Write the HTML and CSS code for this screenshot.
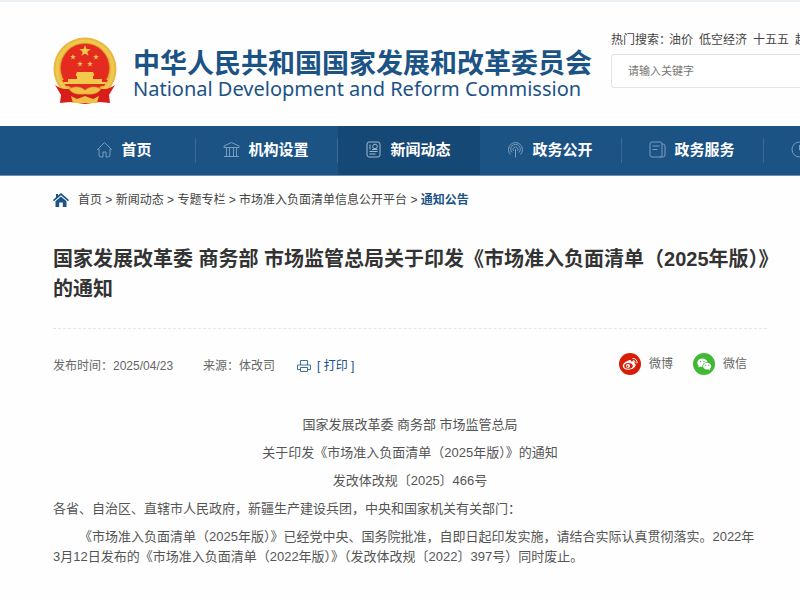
FILE: index.html
```html
<!DOCTYPE html>
<html lang="zh-CN">
<head>
<meta charset="utf-8">
<title>国家发展和改革委员会</title>
<link rel="stylesheet" href="styles.css">
</head>
<body>
<header class="masthead">
  <div class="brand">
    <svg class="emblem" viewBox="0 0 64 68" aria-hidden="true">
      <defs>
        <path id="star" d="M0-5 1.2-1.6 4.8-1.5 1.9.6 2.9 4 0 2-2.9 4-1.9.6-4.8-1.5-1.2-1.6Z"/>
      </defs>
      <circle cx="32" cy="32" r="31.500" fill="#e9b93e"/>
      <circle cx="32" cy="32" r="28" fill="none" stroke="#f0c850" stroke-width="3"/>
      <circle cx="32" cy="31" r="24.500" fill="#e52a20" stroke="#cf8e28" stroke-width=".6"/>
      <path d="M2 48c3 2 7 4 10 4h40c3 0 7-2 10-4l-6 10 1 8-10-1-15 2-15-2-10 1 1-8Z" fill="#d81e1a"/>
      <path d="M9 43h46l-4 6H13Z" fill="#e52a20"/>
      <g fill="#f3c94b">
        <use href="#star" transform="translate(32 14) scale(1.2)"/>
        <use href="#star" transform="translate(20 20) scale(.6)"/>
        <use href="#star" transform="translate(43 20) scale(.6)"/>
        <use href="#star" transform="translate(27 27) scale(.6)"/>
        <use href="#star" transform="translate(37 27) scale(.6)"/>
        <path d="M23 37l1-2h16l1 2v2h-1v3h9v3h4l1 2H10l1-2h4v-3h9v-3h-1Z"/>
      </g>
      <path d="M16 52c6-3 10-3 16 1 6-4 10-4 16-1-3 5-10 6-16 5-6 1-13 0-16-5Z" fill="#efc044" stroke="#ca8424" stroke-width=".6"/>
      <path d="M18 59l6 3 8-3 8 3 6-3-2 7H20Z" fill="#efc044"/>
    </svg>
    <div class="brand-text">
      <div class="brand-cn">中华人民共和国国家发展和改革委员会</div>
      <div class="brand-en" lang="en">National Development and Reform Commission</div>
    </div>
  </div>
  <form class="search">
    <div class="hot"><span>热门搜索：</span><a href="#">油价</a><a href="#">低空经济</a><a href="#">十五五</a><a href="#">超长期国债</a></div>
    <input class="search-box" type="text" aria-label="请输入关键字" placeholder="请输入关键字">
  </form>
</header>

<nav class="nav">
  <a class="nav-item" href="#">
    <svg class="nav-icon" viewBox="0 0 17 17" aria-hidden="true"><path d="M1 9 8.500 1.500 16 9M3 8v6q0 2 2 2h2v-5h3v5h2q2 0 2-2V8"/></svg>首页</a>
  <a class="nav-item" href="#">
    <svg class="nav-icon" viewBox="0 0 17 17" aria-hidden="true"><path d="M1 5 8.500 1.500 16 5v1.500H1ZM3.500 7v8M6.500 7v8M10.500 7v8M13.500 7v8M1 15.500h15"/></svg>机构设置</a>
  <a class="nav-item nav-active" href="#">
    <svg class="nav-icon" viewBox="0 0 17 17" aria-hidden="true"><rect x="2" y="1" width="13" height="15" rx="2"/><path d="M5 3.500v5M4.500 10.500h8M4.500 13h6M7 8.500h5.500"/><circle cx="10" cy="5.500" r="2.300"/></svg>新闻动态</a>
  <a class="nav-item" href="#">
    <svg class="nav-icon" viewBox="0 0 17 17" aria-hidden="true"><path d="M3.500 13.500a7 7 0 1 1 10 0M5 11.500a4.800 4.800 0 1 1 7 0M6.500 10a2.500 2.500 0 1 1 4 0M8.500 8v8.500"/></svg>政务公开</a>
  <a class="nav-item" href="#">
    <svg class="nav-icon" viewBox="0 0 17 17" aria-hidden="true"><rect x="1" y="1" width="12" height="15" rx="2"/><path d="M13 3h1q2 0 2 2v9q0 2-2 2h-3M3.500 5h7M3.500 8.500h5"/></svg>政务服务</a>
  <a class="nav-item" href="#">
    <svg class="nav-icon" viewBox="0 0 17 17" aria-hidden="true"><circle cx="8.500" cy="8.500" r="7.500"/><path d="M8.500 4v5l3 2"/></svg>互动交流</a>
</nav>

<main class="content">
  <div class="crumbs">
    <svg class="crumb-icon" viewBox="0 0 16 14" aria-hidden="true"><path d="M8 0 16 7l-1 1.200L8 2.200 1 8.200 0 7 3 4.300V1h2v1.600ZM8 3.500l5.500 4.800V14H9.800V9.500H6.200V14H2.500V8.300Z"/></svg>
    <p class="crumb-path"><a href="#">首页</a> &gt; <a href="#">新闻动态</a> &gt; <a href="#">专题专栏</a> &gt; <a href="#">市场准入负面清单信息公开平台</a> &gt; <a class="crumb-current" href="#">通知公告</a></p>
  </div>
  <h1 class="title">国家发展改革委 商务部 市场监管总局关于印发《市场准入负面清单（2025年版）》的通知</h1>
  <div class="meta">
    <span class="date">发布时间：2025/04/23</span>
    <span class="source">来源：体改司</span>
    <button class="print" type="button">
      <svg class="print-icon" viewBox="0 0 14 12" aria-hidden="true"><path d="M3.500 5V.5h7V5M3.500 9.500h-3V5h13v4.500h-3M3.500 7.500h7v4h-7Z"/></svg>[ 打印 ]</button>
    <div class="share">
      <a class="share-link" href="#">
        <svg class="share-icon" viewBox="0 0 22 22" aria-hidden="true"><circle cx="11" cy="11" r="11" fill="#d81e06"/><path d="M9.500 7.500c1.500-.8 3-.4 2.600 1.200 2-.8 3.600-.2 3 1.400 1.500.5 2 1.600 1.300 3-1 2.300-3.700 3.600-6.800 3.600-3 0-5.800-1.400-5.800-3.800 0-2 2.800-4.600 5.700-5.400Z" fill="#fff"/><ellipse cx="9.500" cy="12.800" rx="4.300" ry="2.900" fill="#d81e06"/><circle cx="9" cy="13" r="2.100" fill="#fff"/><circle cx="8.600" cy="13.300" r=".9" fill="#d81e06"/><path d="M13.500 5.500a4 4 0 0 1 4.500 4.800M14 7.500a2 2 0 0 1 2 2.300" fill="none" stroke="#fff"/></svg>微博</a>
      <a class="share-link" href="#">
        <svg class="share-icon" viewBox="0 0 22 22" aria-hidden="true"><circle cx="11" cy="11" r="11" fill="#42b935"/><path d="M9.300 5.500c3 0 5 1.800 5.100 3.800-3.300 0-5.400 2-5 4.600-.9.100-1.700 0-2.500-.3L5.200 14.500l.4-1.700C3.300 10.500 4.300 5.500 9.300 5.500Z" fill="#fff"/><path d="M14 9.800c4.300.2 5.500 4.200 2.900 6l.3 1.300-1.400-.7c-3.300.7-5.800-.9-5.800-3.100 0-1.900 1.700-3.500 4-3.500Z" fill="#fff"/><g fill="#42b935"><circle cx="7.500" cy="8.500" r=".7"/><circle cx="11" cy="8.500" r=".7"/><circle cx="12.700" cy="12.200" r=".6"/><circle cx="15.500" cy="12.200" r=".6"/></g></svg>微信</a>
    </div>
  </div>
  <article class="article">
    <p class="centered">国家发展改革委 商务部 市场监管总局</p>
    <p class="centered">关于印发《市场准入负面清单（2025年版）》的通知</p>
    <p class="centered">发改体改规〔2025〕466号</p>
    <p>各省、自治区、直辖市人民政府，新疆生产建设兵团，中央和国家机关有关部门：</p>
    <p class="indented">《市场准入负面清单（2025年版）》已经党中央、国务院批准，自即日起印发实施，请结合实际认真贯彻落实。2022年<span class="date-unit">3月12日</span>发布的《市场准入负面清单（2022年版）》（发改体改规〔2022〕397号）同时废止。</p>
  </article>
</main>
</body>
</html>
```

FILE: styles.css
```css
* { box-sizing: border-box; }

body {
  margin: 0;
  overflow-x: hidden;
  border-top: 2px solid #ebf0f5;
  background: #fefefe;
  color: #444;
  font: 12px/20px "Liberation Sans", "Noto Sans CJK SC", sans-serif;
}

a { color: inherit; text-decoration: none; }
p { margin: 0; }

.masthead {
  display: flex;
  align-items: flex-start;
  height: 124px;
  padding: 28px 0 0 53px;
  overflow: hidden;
}

.brand { display: flex; flex: none; gap: 16px; width: 558px; }
.emblem { flex: none; width: 64px; height: 68px; margin-top: 7px; }
.brand-text { padding-top: 20px; color: #1b5385; white-space: nowrap; }
.brand-cn { font-size: 27px; font-weight: bold; line-height: 28px; }
.brand-en { font: 20px/22px "Noto Sans", sans-serif; }

.search { flex: none; width: 300px; }
.hot { display: flex; gap: 6px; white-space: nowrap; }
.hot span { margin-right: -8px; }
.search-box {
  display: block;
  width: 100%;
  height: 34px;
  margin-top: 4px;
  padding: 0 16px;
  border: 1px solid #e3e3e3;
  border-radius: 3px;
  background: #fff;
  font: inherit;
  font-size: 11px;
}
.search-box::placeholder { color: #757575; }

.nav {
  display: flex;
  height: 50px;
  padding-left: 54px;
  border-bottom: 1px solid #6b92b5;
  overflow: hidden;
  background: #1b5385;
}
.nav-item {
  display: flex;
  flex: none;
  align-items: center;
  justify-content: center;
  gap: 8px;
  width: 142px;
  padding: 0 2px 2px 0;
  background: linear-gradient(#376a97, #376a97) right center / 1px 25px no-repeat;
  color: #fff;
  font-size: 15px;
  font-weight: bold;
}
.nav-active { background: #164876; }
.nav-icon { width: 17px; height: 17px; fill: none; stroke: #7c9dbb; }
.nav-active .nav-icon { stroke: #a3b9cd; }

.content { padding: 14px 33px 0 53px; }

.crumbs { display: flex; align-items: center; gap: 9px; }
.crumb-icon { width: 16px; height: 14px; fill: #1b5385; }
.crumb-current { color: #1b5385; font-weight: bold; }

/* The closing brackets hang past the text column. */
.title {
  margin: 34px -16px 24px 0;
  color: #333;
  font-size: 20px;
  line-height: 30px;
}

.meta {
  display: flex;
  align-items: flex-start;
  padding-top: 24px;
  border-top: 1px dashed #e6e6e6;
  color: #666;
  line-height: 26px;
}
.source { margin-left: 30px; }
.print {
  display: flex;
  align-items: center;
  gap: 6px;
  margin-left: 22px;
  padding: 0;
  border: 0;
  background: none;
  color: #1b5385;
  font: inherit;
}
.print-icon { width: 14px; height: 12px; fill: none; stroke: #3f719c; }
.share { display: flex; gap: 20px; margin-left: auto; padding-right: 20px; line-height: 22px; }
.share-link { display: flex; align-items: center; gap: 8px; }
.share-icon { width: 22px; height: 22px; }

.article {
  margin-top: 36px;
  color: #555;
  font-size: 13px;
}
.article p { margin-bottom: 8px; }
.centered { text-align: center; }
.indented { text-indent: 2em; }
.date-unit { white-space: nowrap; }
```
